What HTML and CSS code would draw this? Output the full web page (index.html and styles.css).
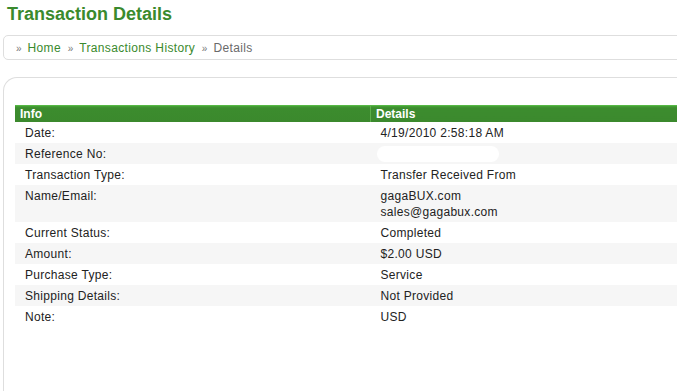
FILE: index.html
```html
<!DOCTYPE html>
<html lang="en">
<head>
    <meta charset="UTF-8">
    <title>Transaction Details</title>
    <link rel="stylesheet" href="styles.css">
</head>
<body>
    <h1 class="page-title">Transaction Details</h1>
    <div class="crumbs">
        <span class="sep">&raquo;</span><a href="#">Home</a>
        <span class="sep">&raquo;</span><a href="#">Transactions History</a>
        <span class="sep">&raquo;</span><span class="current">Details</span>
    </div>
    <div class="panel">
        <table class="details">
            <thead>
                <tr>
                    <th class="col-info">Info</th>
                    <th>Details</th>
                </tr>
            </thead>
            <tbody>
                <tr><td>Date:</td><td>4/19/2010 2:58:18 AM</td></tr>
                <tr class="alt"><td>Reference No:</td><td><span class="hidden-ref"></span></td></tr>
                <tr><td>Transaction Type:</td><td>Transfer Received From</td></tr>
                <tr class="alt tall"><td>Name/Email:</td><td>gagaBUX.com<br>sales@gagabux.com</td></tr>
                <tr><td>Current Status:</td><td>Completed</td></tr>
                <tr class="alt"><td>Amount:</td><td>$2.00 USD</td></tr>
                <tr><td>Purchase Type:</td><td>Service</td></tr>
                <tr class="alt"><td>Shipping Details:</td><td>Not Provided</td></tr>
                <tr><td>Note:</td><td>USD</td></tr>
            </tbody>
        </table>
    </div>
</body>
</html>
```

FILE: styles.css
```css
html, body {
    overflow: hidden;
}

body {
    font-family: "Liberation Sans", Arial, sans-serif;
    font-size: 12px;
    color: #222222;
    background-color: #ffffff;
    margin: 0;
    padding: 0;
}

.page-title {
    margin: 0;
    padding: 3px 7px 0;
    font-size: 18px;
    line-height: 22px;
    color: #3a8a2d;
}

.crumbs {
    margin: 10px -20px 0 3px;
    height: 23px;
    line-height: 24px;
    padding-left: 12px;
    border: 1px solid #dedede;
    border-radius: 5px;
    font-size: 12px;
    letter-spacing: 0.35px;
}

.crumbs a {
    color: #3a8a2d;
    text-decoration: none;
}

.crumbs .sep {
    color: #777777;
    font-size: 10px;
    letter-spacing: 0;
    margin-right: 6px;
}

.crumbs a + .sep {
    margin-left: 3px;
}

.crumbs .current {
    color: #6a6a6a;
}

.panel {
    margin: 17px -40px 0 3px;
    height: 400px;
    padding: 27px 0 0 11px;
    border-top: 1px solid #dedede;
    border-left: 1px solid #dedede;
    border-top-left-radius: 14px;
}

.details {
    width: 720px;
    border-collapse: collapse;
}

.details th {
    height: 17px;
    padding: 0 0 0 5px;
    text-align: left;
    font-size: 12px;
    line-height: 16px;
    color: #ffffff;
    background: linear-gradient(#56b845 0, #56b845 1px, #47a336 1px, #3c8c2e 3px, #3b892d 100%);
}

.details th.col-info {
    width: 350px;
    border-right: 1px solid #5cb04a;
}

.details tbody tr {
    height: 21px;
}

.details td {
    padding: 1px 0 0 10px;
    vertical-align: top;
    line-height: 20px;
    letter-spacing: 0.3px;
}

.details tr.alt td {
    background-color: #f6f6f6;
}

.details tbody tr.tall {
    height: 37px;
}

.details tr.tall td {
    line-height: 16px;
    padding-top: 3px;
}

.hidden-ref {
    display: inline-block;
    width: 122px;
    height: 16px;
    margin: 2px 0 0 -4px;
    background-color: #ffffff;
    border-radius: 8px;
    vertical-align: top;
}
```
